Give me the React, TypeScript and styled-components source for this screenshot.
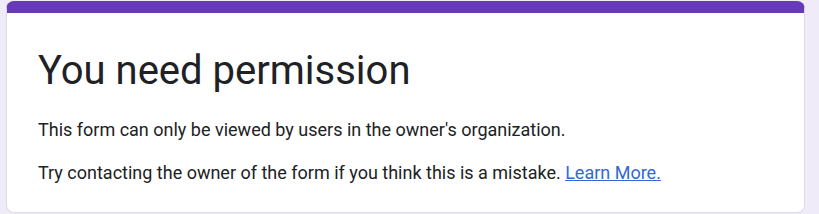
import React from "react";
import styled, { createGlobalStyle } from "styled-components";

const GlobalStyle = createGlobalStyle`
  html, body {
    margin: 0;
    padding: 0;
    background: #f0ebf8;
    font-family: Roboto, "Liberation Sans", Arial, sans-serif;
  }
`;

const App = () => {
  return (
    <>
      <GlobalStyle />
      <StyledPage>
        <StyledCard>
          <StyledTitle>You need permission</StyledTitle>
          <StyledText>
            This form can only be viewed by users in the owner's organization.
          </StyledText>
          <StyledText>
            Try contacting the owner of the form if you think this is a mistake.{" "}
            <StyledLink href="#">Learn More.</StyledLink>
          </StyledText>
        </StyledCard>
      </StyledPage>
    </>
  );
};

export default App;

const StyledPage = styled.div`
  padding: 1px 14px 0 6px;
`;

const StyledCard = styled.div`
  background: #fff;
  border: 1px solid #dadce0;
  border-top: 12px solid #673ab7;
  border-radius: 8px;
  padding: 34px 31px 22px 31px;
  height: 212px;
  box-sizing: border-box;
`;

const StyledTitle = styled.h1`
  margin: 0 0 23px 0;
  font-size: 40px;
  font-weight: 400;
  line-height: 48px;
  color: #202124;
`;

const StyledText = styled.p`
  margin: 0 0 19px 0;
  font-size: 18px;
  line-height: 24px;
  color: #202124;
`;

const StyledLink = styled.a`
  color: #3367d6;
  text-decoration: underline;
`;
